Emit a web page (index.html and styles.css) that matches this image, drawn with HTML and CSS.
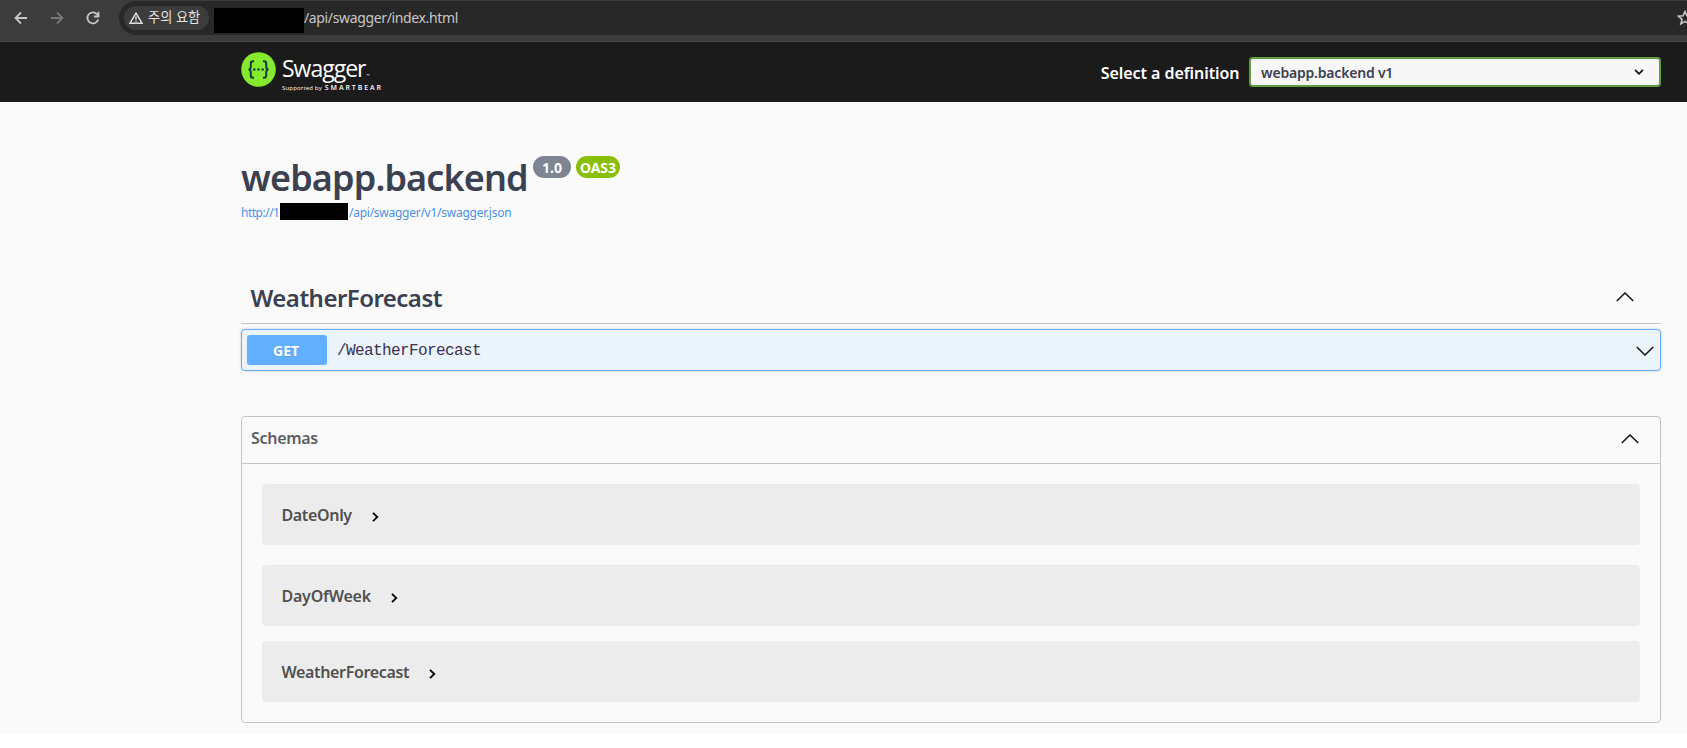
FILE: index.html
```html
<!DOCTYPE html>
<html lang="ko">
<head>
<meta charset="utf-8">
<title>Swagger UI</title>
<link rel="stylesheet" href="styles.css">
</head>
<body>
<div class="browser">
  <svg class="nav-icon" viewBox="0 0 16 16"><path d="M14 8H3M8 2.500 2.500 8 8 13.500"/></svg>
  <svg class="nav-icon disabled" viewBox="0 0 16 16"><path d="M2 8h11M8 2.500 13.500 8 8 13.500"/></svg>
  <svg class="nav-icon" viewBox="0 0 16 16"><path d="M13.200 9.500A5.500 5.500 0 1 1 12 4.200L13.500 6M13.500 1.800V6.500H9"/></svg>
  <div class="omnibox">
    <div class="chip">
      <svg class="warn" viewBox="0 0 14 12"><path d="M7 1.200 13 11.200H1ZM7 4.500v3.300M7 8.700v1.300"/></svg>
      <span class="chip-text">주의 요함</span>
    </div>
    <span class="mask host"></span>
    <span class="url">/api/swagger/index.html</span>
    <svg class="star" viewBox="0 0 16 16"><path d="m8 1.500 1.900 4.300 4.700.4-3.600 3.100 1.100 4.600L8 11.400l-4.100 2.500L5 9.300 1.400 6.200l4.700-.4Z"/></svg>
  </div>
</div>
<header class="topbar">
  <div class="logo">
    <svg class="logo-mark" viewBox="0 0 35 35">
      <circle cx="17.500" cy="17.500" r="17.300" fill="#85ea2d"/>
      <g fill="none" stroke="#173647" stroke-width="2">
        <path d="M13 9.200h-1c-1.700 0-2.200.8-2.200 2.300v3c0 2-.7 3-2.300 3 1.600 0 2.300 1 2.300 3v3c0 1.500.5 2.300 2.200 2.300h1"/>
        <path d="M22 9.200h1c1.700 0 2.200.8 2.200 2.300v3c0 2 .7 3 2.300 3-1.600 0-2.300 1-2.300 3v3c0 1.500-.5 2.300-2.200 2.300h-1"/>
      </g>
      <g fill="#173647"><circle cx="13.300" cy="17.500" r="1.200"/><circle cx="17.500" cy="17.500" r="1.200"/><circle cx="21.700" cy="17.500" r="1.200"/></g>
    </svg>
    <div class="logo-words">
      <div class="logo-name">Swagger<span class="tm">™</span></div>
      <div class="logo-by"><span class="by">Supported by</span><span class="bear">SMARTBEAR</span></div>
    </div>
  </div>
  <div class="picker">
    <span class="picker-label">Select a definition</span>
    <div class="select"><span class="select-value">webapp.backend v1</span>
      <svg class="select-arrow" viewBox="0 0 10 6"><path d="m1 .8 4 4 4-4"/></svg>
    </div>
  </div>
</header>
<main class="page">
  <div class="info">
    <h1 class="title">webapp.backend</h1>
    <span class="badge version">1.0</span>
    <span class="badge oas">OAS3</span>
  </div>
  <div class="link"><span class="link-start">http://1</span><span class="mask link-mask"></span><span class="link-end">/api/swagger/v1/swagger.json</span></div>
  <div class="tag">
    <h2 class="tag-name">WeatherForecast</h2>
    <svg class="chevron" viewBox="0 0 18 10"><path d="m.8 9 8.200-8 8.200 8"/></svg>
  </div>
  <div class="operation">
    <span class="method">GET</span>
    <span class="path">/WeatherForecast</span>
    <svg class="chevron" viewBox="0 0 18 10"><path d="m.8 1 8.200 8 8.200-8"/></svg>
  </div>
  <section class="schemas">
    <div class="schemas-head">
      <h3 class="schemas-title">Schemas</h3>
      <svg class="chevron" viewBox="0 0 18 10"><path d="m.8 9 8.200-8 8.200 8"/></svg>
    </div>
    <div class="schemas-body">
      <div class="model"><span class="model-name">DateOnly</span><svg class="caret" viewBox="0 0 7 10"><path d="m1 .8 4.300 4.200L1 9.200"/></svg></div>
      <div class="model second"><span class="model-name">DayOfWeek</span><svg class="caret" viewBox="0 0 7 10"><path d="m1 .8 4.300 4.200L1 9.200"/></svg></div>
      <div class="model"><span class="model-name">WeatherForecast</span><svg class="caret" viewBox="0 0 7 10"><path d="m1 .8 4.300 4.200L1 9.200"/></svg></div>
    </div>
  </section>
</main>
</body>
</html>
```
FILE: styles.css
```css
* { box-sizing: border-box; }
html { background: #fff; }
body {
  margin: 0;
  height: 748px;
  overflow: hidden;
  background: #fff;
  font-family: "Noto Sans", "Open Sans", "Noto Sans CJK KR", sans-serif;
  color: #3b4151;
  white-space: nowrap;
}
h1, h2, h3 { margin: 0; font-weight: 600; }
svg { display: block; flex: none; fill: none; }

.browser {
  display: flex;
  height: 42px;
  padding: 1px 0 0 13px;
  background: #3c3c3c;
  border-bottom: 1px solid #4a4a4a;
}
.nav-icon { width: 16px; height: 16px; margin: 9px 20px 0 0; stroke: #c7c7c7; stroke-width: 1.8; }
.nav-icon.disabled { stroke: #777; }
.omnibox {
  display: flex;
  flex: 1;
  height: 34px;
  margin-left: -2px;
  padding: 5px 0 0 5px;
  border-radius: 17px 0 0 17px;
  background: #282828;
  overflow: hidden;
}
.chip { display: flex; align-items: center; flex: none; width: 85px; height: 24px; padding-left: 5px; border-radius: 12px; background: #3c3c3c; }
.warn { width: 14px; height: 12px; stroke: #dedede; stroke-width: 1.5; }
.chip-text { margin: -2px 0 0 5px; font: 13.2px/24px "Noto Sans CJK KR", sans-serif; color: #e3e3e3; }
.mask { display: block; flex: none; background: #000; }
.host { width: 90px; height: 25px; margin: 2px 0 0 5px; }
.url { font-size: 14px; line-height: 24px; letter-spacing: -.36px; color: #c7c7c7; }
.star { width: 16px; height: 16px; margin: 4px -6px 0 auto; stroke: #c7c7c7; stroke-width: 1.6; }

.topbar { display: flex; justify-content: space-between; height: 60px; padding: 0 26px 0 241px; background: #1b1b1b; }
.logo { display: flex; padding-top: 10px; }
.logo-mark { width: 35px; height: 35px; }
.logo-words { margin-left: 6px; color: #fff; }
.logo-name { height: 32px; font: 400 23px/32px "Open Sans", sans-serif; letter-spacing: -1px; }
.tm { margin-left: 1px; font-size: 4px; }
.logo-by { display: flex; gap: 3px; font: 6px/8px "Open Sans", sans-serif; }
.by { letter-spacing: .17px; }
.bear { font-weight: 600; font-size: 7px; letter-spacing: 1.9px; }
.picker { display: flex; padding-top: 15px; }
.picker-label { margin-right: 9.5px; font-size: 16px; font-weight: 600; line-height: 32px; letter-spacing: -.06px; color: #fff; }
.select {
  display: flex;
  justify-content: space-between;
  width: 412px;
  height: 30px;
  padding: 0 15px 0 10px;
  border: 2px solid #62a03f;
  border-radius: 4px;
  background: #f7f7f7;
}
.select-value { font-size: 14px; font-weight: 600; line-height: 28px; letter-spacing: -.2px; }
.select-arrow { width: 10px; height: 6px; margin-top: 10px; stroke: #111; stroke-width: 1.7; }

.page { height: 631.5px; padding: 0 26px 0 241px; background: #fafafa; }
.info { display: flex; height: 98px; padding-top: 54px; }
.title { width: 292px; font-size: 36px; line-height: 44px; letter-spacing: -.87px; }
.badge { height: 22px; border-radius: 11px; color: #fff; font-size: 14px; font-weight: 700; line-height: 23px; text-align: center; }
.version { width: 38px; background: #7d8492; }
.oas { width: 44px; margin-left: 5px; background: #89bf04; }
.link { display: flex; height: 73px; font-size: 12px; line-height: 25px; letter-spacing: -.26px; color: #4990e2; }
.link-start { width: 39px; letter-spacing: -.5px; }
.link-mask { width: 68px; height: 17px; margin-top: 3px; margin-right: 1px; }
.tag { display: flex; justify-content: space-between; height: 51px; padding: 0 27px 0 9.5px; border-bottom: 1px solid #c4c6ca; }
.tag-name { font-size: 24px; line-height: 50px; letter-spacing: -.53px; }
.tag .chevron { margin-top: 19px; }
.chevron { width: 18px; height: 10px; stroke: #111; stroke-width: 1.5; }
.operation {
  display: flex;
  height: 42px;
  margin-top: 5px;
  padding: 5px 6px 0 5px;
  border: 1px solid #61affe;
  border-radius: 4px;
  background: #ebf3fb;
  box-shadow: 0 0 3px rgba(0, 0, 0, .19);
}
.method { width: 80px; height: 30px; padding-right: 2px; border-radius: 3px; background: #61affe; color: #fff; font-size: 14px; font-weight: 700; line-height: 32px; letter-spacing: -.1px; text-align: center; text-shadow: 0 1px 0 rgba(0, 0, 0, .1); }
.path { margin-left: 10px; font: 16px/33px "Liberation Mono", monospace; letter-spacing: -.6px; color: #3b3151; }
.operation .chevron { margin: 11px 0 0 auto; }
.schemas { height: 307px; margin-top: 45px; border: 1px solid #c0c3c8; border-radius: 4px; }
.schemas-head { display: flex; justify-content: space-between; height: 47px; padding: 0 21px 0 9px; border-bottom: 1px solid #c0c3c8; }
.schemas-title { font-size: 16px; line-height: 43px; letter-spacing: -.3px; color: #5c5e64; }
.schemas-head .chevron { margin-top: 17px; }
.schemas-body { padding: 20px; }
.model { display: flex; height: 61px; margin-bottom: 20px; padding-left: 19.5px; border-radius: 4px; background: #ececec; }
.model.second { margin-bottom: 15px; }
.model-name { font-size: 16px; font-weight: 600; line-height: 63px; letter-spacing: -.35px; color: #505050; }
.second .model-name { letter-spacing: -.23px; }
.caret { width: 7px; height: 10px; margin: 28px 0 0 20px; stroke: #000; stroke-width: 1.8; }
```
